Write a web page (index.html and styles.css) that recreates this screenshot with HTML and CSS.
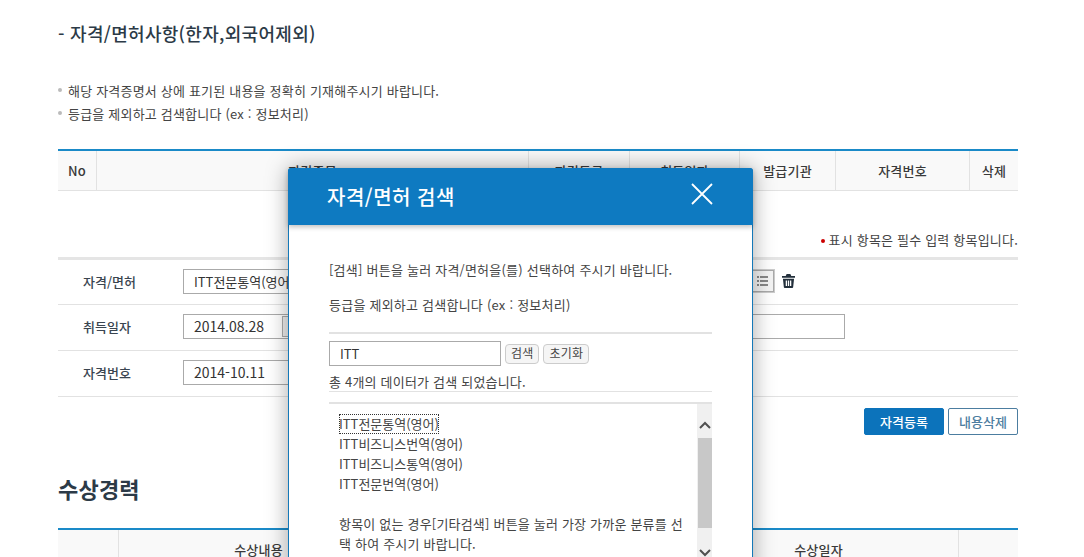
FILE: index.html
```html
<!DOCTYPE html>
<html lang="ko">
<head>
<meta charset="utf-8">
<title>자격/면허사항</title>
<link rel="stylesheet" href="styles.css">
</head>
<body>
<main class="page">
  <h3 class="sub-title">- 자격/면허사항(한자,외국어제외)</h3>
  <ul class="notes">
    <li>해당 자격증명서 상에 표기된 내용을 정확히 기재해주시기 바랍니다.</li>
    <li>등급을 제외하고 검색합니다 (ex : 정보처리)</li>
  </ul>
  <div class="thead cert-head">
    <div class="th">No</div>
    <div class="th">자격종목</div>
    <div class="th">자격등급</div>
    <div class="th">취득일자</div>
    <div class="th">발급기관</div>
    <div class="th">자격번호</div>
    <div class="th">삭제</div>
  </div>
  <p class="required"><span class="dot"></span>표시 항목은 필수 입력 항목입니다.</p>
  <div class="form">
    <div class="form-row">
      <div class="label">자격/면허</div>
      <div class="field wide">ITT전문통역(영어)</div>
      <div class="list-btn">
        <svg width="12" height="10" viewBox="0 0 12 10" fill="#888"><rect x="0" y="0" width="2" height="2"/><rect x="3" y="0" width="8" height="2"/><rect x="0" y="4" width="2" height="2"/><rect x="3" y="4" width="8" height="2"/><rect x="0" y="8" width="2" height="2"/><rect x="3" y="8" width="8" height="2"/></svg>
      </div>
      <svg class="trash" width="13" height="14" viewBox="0 0 14 15" fill="#23303c"><path d="M5 0h4l1 2h4v2H0V2h4z"/><path d="M1 5h12l-1 9.2q-.1.8-1 .8H3q-.9 0-1-.8zM4 7v6h1.400V7zm2.300 0v6h1.400V7zM8.600 7v6H10V7z" fill-rule="evenodd"/></svg>
    </div>
    <div class="form-row">
      <div class="label">취득일자</div>
      <div class="field date">2014.08.28<span class="cal"></span></div>
      <div class="field org"></div>
    </div>
    <div class="form-row">
      <div class="label">자격번호</div>
      <div class="field date">2014-10.11</div>
    </div>
  </div>
  <div class="actions">
    <button class="btn primary">자격등록</button>
    <button class="btn ghost">내용삭제</button>
  </div>
  <h2 class="section-title">수상경력</h2>
  <div class="thead award-head">
    <div class="th"></div>
    <div class="th">수상내용</div>
    <div class="th plain"></div>
    <div class="th">수상일자</div>
    <div class="th"></div>
  </div>
</main>

<section class="modal">
  <header class="modal-head">
    <h2>자격/면허 검색</h2>
    <svg class="close" width="22" height="22" viewBox="0 0 22 22" stroke="#fff" stroke-width="1.800" fill="none"><path d="M1 1l20 20M21 1L1 21"/></svg>
  </header>
  <div class="modal-body">
    <p class="guide">[검색] 버튼을 눌러 자격/면허을(를) 선택하여 주시기 바랍니다.</p>
    <p class="guide second">등급을 제외하고 검색합니다 (ex : 정보처리)</p>
    <div class="search">
      <div class="search-input">ITT</div>
      <button class="mini">검색</button>
      <button class="mini">초기화</button>
    </div>
    <p class="count">총 4개의 데이터가 검색 되었습니다.</p>
    <div class="result">
      <div class="result-list">
        <a class="item focus">ITT전문통역(영어)</a>
        <a class="item">ITT비즈니스번역(영어)</a>
        <a class="item">ITT비즈니스통역(영어)</a>
        <a class="item">ITT전문번역(영어)</a>
        <p class="item empty">항목이 없는 경우[기타검색] 버튼을 눌러 가장 가까운 분류를 선택 하여 주시기 바랍니다.</p>
      </div>
      <div class="scrollbar">
        <svg class="arrow" width="14" height="12" viewBox="0 0 14 12" fill="none" stroke="#505050" stroke-width="2"><path d="M2 9l5-5 5 5"/></svg>
        <div class="thumb"></div>
        <svg class="arrow" width="14" height="12" viewBox="0 0 14 12" fill="none" stroke="#505050" stroke-width="2"><path d="M2 3l5 5 5-5"/></svg>
      </div>
    </div>
  </div>
</section>
</body>
</html>
```
FILE: styles.css
```css
* { box-sizing: border-box; }
html, body { margin: 0; height: 100%; overflow: hidden; background: #fff; }
body {
  font-family: "Noto Sans CJK KR", "Noto Sans", sans-serif;
  color: #333;
  font-size: 13px;
}
.page { width: 1018px; padding: 0 0 0 58px; }
.sub-title {
  margin: 0;
  padding-top: 20px;
  height: 82px;
  font-size: 18px;
  line-height: 26px;
  font-weight: 500;
  color: #2c3a47;
  letter-spacing: 0.3px;
}
.notes { margin: 0; padding: 0; list-style: none; height: 67px; }
.notes li {
  position: relative;
  height: 23px;
  line-height: 18px;
  padding-left: 10px;
  font-size: 13px;
  color: #444;
  letter-spacing: 0.2px;
}
.notes li::before {
  content: "";
  position: absolute;
  left: 0;
  top: 6px;
  width: 4px;
  height: 4px;
  border-radius: 50%;
  background: #bbb;
}
.thead {
  display: grid;
  border-top: 2px solid #1a8ac8;
  border-bottom: 1px solid #e2e2e2;
  background: #f9f9f9;
}
.cert-head { height: 42px; grid-template-columns: 38px 432px 101px 110px 96px 134px 49px; }
.award-head { height: 42px; grid-template-columns: 60px 280px 280px 280px 60px; }
.th {
  display: flex;
  align-items: center;
  justify-content: center;
  font-size: 13px;
  font-weight: 500;
  color: #3a3a3a;
  letter-spacing: 0.2px;
  border-left: 1px solid #e2e2e2;
}
.th:first-child { border-left: 0; }
.award-head .th { align-items: flex-start; padding-top: 10px; }
.required {
  margin: 0;
  height: 66px;
  padding-top: 39px;
  line-height: 20px;
  text-align: right;
  font-size: 13px;
  color: #444;
  letter-spacing: 0.2px;
}
.dot {
  display: inline-block;
  width: 4px;
  height: 4px;
  margin-right: 4px;
  border-radius: 50%;
  background: #c00;
  vertical-align: 2px;
}
.form { border-top: 3px solid #e5e5e5; }
.form-row {
  display: flex;
  align-items: center;
  height: 46px;
  padding-bottom: 2px;
  border-bottom: 1px solid #e2e2e2;
}
.form-row:first-child { height: 45px; }
.label { width: 125px; padding-left: 25px; font-size: 13px; font-weight: 500; color: #3a4550; }
.field {
  height: 25px;
  border: 1px solid #aaa;
  padding-left: 10px;
  line-height: 23px;
  font-size: 13px;
  color: #333;
}
.field.wide { width: 570px; }
.field.date { position: relative; width: 120px; font-size: 14px; }
.cal {
  position: absolute;
  left: 98px;
  top: 1px;
  width: 8px;
  height: 21px;
  border: 1px solid #aaa;
  background: #eee;
}
.field.org { width: 308px; margin-left: 234px; }
.list-btn {
  display: flex;
  align-items: center;
  justify-content: center;
  width: 22px;
  height: 22px;
  margin-left: -1px;
  border: 1px solid #aaa;
  outline: 1px solid #ccc;
  background: #f4f4f4;
}
.trash { margin: -1px 0 0 8px; }
.actions { display: flex; justify-content: flex-end; gap: 4px; padding-top: 11px; height: 63px; }
.btn {
  height: 27px;
  padding: 0;
  font: 500 13px "Noto Sans CJK KR", sans-serif;
  border-radius: 2px;
}
.primary { width: 80px; background: #0c73bb; color: #fff; border: 1px solid #0c73bb; }
.ghost { width: 70px; background: #fff; color: #4c7da0; border: 1px solid #4c7da0; }
.section-title {
  margin: 0;
  height: 68px;
  padding-top: 13px;
  line-height: 30px;
  font-size: 22px;
  font-weight: 700;
  letter-spacing: 0.2px;
  color: #2c3a47;
}
.modal {
  position: absolute;
  left: 288px;
  top: 168px;
  width: 465px;
  height: 500px;
  border-radius: 3px 3px 0 0;
  background: #fff;
  box-shadow: 0 0 22px rgba(0,0,0,.35);
  border: 1px solid #1478b8;
}
.modal-head {
  display: flex;
  align-items: center;
  justify-content: space-between;
  height: 57px;
  margin: -1px -1px 0;
  padding: 0 40px 0 39px;
  background: #0e7ac1;
  border-radius: 3px 3px 0 0;
  box-shadow: 0 2px 5px rgba(0,0,0,.25);
}
.modal-head h2 { margin: 0; color: #fff; font-size: 20px; font-weight: 500; line-height: 26px; letter-spacing: 0.5px; }
.close { margin-top: -6px; }
.modal-body { padding: 36px 40px 0 40px; }
.guide { margin: 0; height: 18px; line-height: 18px; font-size: 13px; color: #444; letter-spacing: 0.23px; }
.guide.second { margin-top: 17px; }
.search {
  display: flex;
  align-items: center;
  gap: 4px;
  margin-top: 18px;
  padding-top: 6px;
  border-top: 2px solid #e2e2e2;
  height: 35px;
}
.search-input { width: 172px; height: 25px; border: 1px solid #aaa; padding-left: 10px; line-height: 23px; font-size: 13px; color: #333; }
.mini {
  height: 20px;
  padding: 0 5px 2px;
  border: 1px solid #ccc;
  border-radius: 4px;
  background: #f5f5f5;
  font: 12px/16px "Noto Sans CJK KR", sans-serif;
  color: #444;
  letter-spacing: 0.2px;
}
.count { margin: 0; height: 25px; padding-top: 6px; line-height: 18px; font-size: 13px; border-bottom: 1px solid #e2e2e2; color: #444; letter-spacing: 0.2px; }
.result { display: flex; margin-top: 10px; border-top: 2px solid #e2e2e2; height: 200px; }
.result-list { flex: 1; padding: 10px 10px 0 10px; font-size: 13px; line-height: 20px; color: #444; }
.item { display: block; }
.focus { width: fit-content; outline: 1px dotted #333; outline-offset: -1px; }
.empty { margin: 20px 0 0; letter-spacing: 0.2px; }
.scrollbar { width: 15px; background: #f0f0f0; display: flex; flex-direction: column; align-items: center; padding-top: 15px; }
.thumb { width: 14px; height: 90px; margin: 7px 0 19px; background: #c8c8c8; }
```
